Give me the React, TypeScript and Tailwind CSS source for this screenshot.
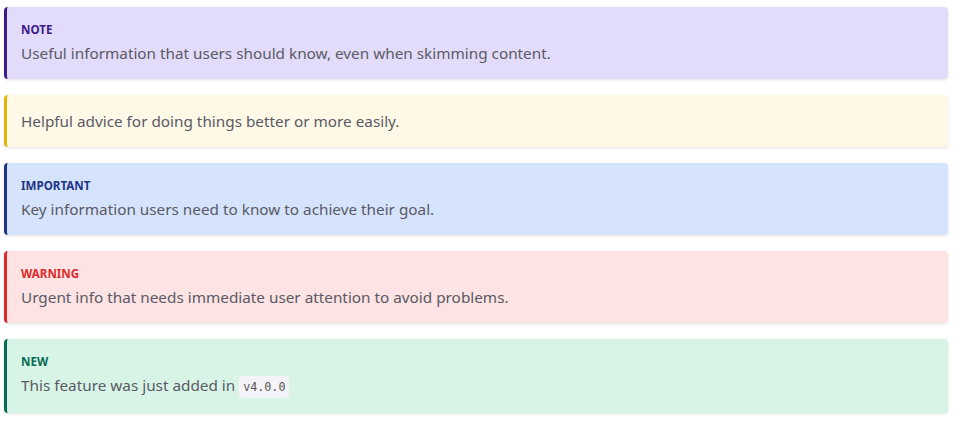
const callouts = [
  {
    title: "NOTE",
    body: "Useful information that users should know, even when skimming content.",
    box: "bg-[#e2dbfa] border-[#3b1a89]",
    label: "text-[#3b1a89]",
  },
  {
    title: null,
    body: "Helpful advice for doing things better or more easily.",
    box: "bg-[#fef8e7] border-[#e8b10c]",
    label: "",
  },
  {
    title: "IMPORTANT",
    body: "Key information users need to know to achieve their goal.",
    box: "bg-[#d5e3fd] border-[#1e3585]",
    label: "text-[#1e3585]",
  },
  {
    title: "WARNING",
    body: "Urgent info that needs immediate user attention to avoid problems.",
    box: "bg-[#fde3e3] border-[#dd2b2b]",
    label: "text-[#dd2b2b]",
  },
  {
    title: "NEW",
    body: (
      <>
        This feature was just added in{" "}
        <code className="rounded-[3px] bg-[#f4f4f8] px-1 py-[4px] font-['DejaVu_Sans_Mono',monospace] text-[11.7px] text-[#555]">
          v4.0.0
        </code>
      </>
    ),
    box: "bg-[#d8f4e7] border-[#086b53]",
    label: "text-[#086b53]",
  },
];

export default function App() {
  return (
    <div className="min-h-[427px] bg-white pl-1 pr-2 pt-[7px] font-['Noto_Sans',sans-serif]">
      <div className="flex flex-col gap-4">
        {callouts.map((c, i) => (
          <div
            key={i}
            className={`rounded-[4px] border-l-[3px] pb-[14px] pl-[14px] pr-4 shadow-[0_1px_3px_rgba(0,0,0,0.12)] ${c.box} ${c.title ? "pt-[15px]" : "pt-[14px]"}`}
          >
            {c.title && (
              <div className={`mb-[3px] text-[11.6px] font-bold leading-4 ${c.label}`}>
                {c.title}
              </div>
            )}
            <p className="text-[15.3px] leading-6 text-[#5a5a64]">{c.body}</p>
          </div>
        ))}
      </div>
    </div>
  );
}
